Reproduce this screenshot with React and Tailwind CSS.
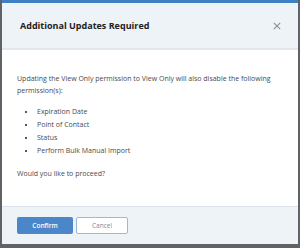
import React from 'react';

const items = ['Expiration Date', 'Point of Contact', 'Status', 'Perform Bulk Manual Import'];

export default function App() {
  return (
    <div className="w-[300px] h-[248px] bg-[#5f6368] pt-[3px] pb-[4px] pl-[2px] pr-[2px] flex" style={{ fontFamily: '"Open Sans", sans-serif' }}>
      <div className="relative flex-1 flex flex-col bg-white border-t-[3px] border-[#3f7fc4] -mt-[3px]">
        <div className="h-[47px] shrink-0 bg-[#eef3f8] border-b-2 border-[#e2e7ed] flex items-center justify-between pl-[18px] pr-[17px]">
          <h2 className="text-[9px] font-bold text-[#222]">Additional Updates Required</h2>
          <svg width="8" height="8" viewBox="0 0 10 10" className="text-[#8a8f96]">
            <path d="M1 1 L9 9 M9 1 L1 9" stroke="currentColor" strokeWidth="1.4" fill="none" />
          </svg>
        </div>
        <div className="flex-1 px-[15px] pt-[23px] text-[7px] leading-[12px] text-[#4a4a4a]">
          <p>Updating the View Only permission to View Only will also disable the following permission(s):</p>
          <ul className="mt-[8px] pl-[19px] list-disc leading-[13px] marker:text-[#222]">
            {items.map((t) => (
              <li key={t} className="pl-[1px]">{t}</li>
            ))}
          </ul>
          <p className="mt-[11px]">Would you like to proceed?</p>
        </div>
        <div className="h-[38px] shrink-0 bg-[#eef3f8] border-t border-[#dde3ea] flex items-center gap-[3px] px-[15px]">
          <button className="w-[56px] h-[17px] rounded-[2px] bg-[#4a86c8] text-white text-[6.5px] font-semibold">Confirm</button>
          <button className="w-[52px] h-[17px] rounded-[2px] bg-white border border-[#9ab9dc] text-[#7a8a9c] text-[6.5px]">Cancel</button>
        </div>
      </div>
    </div>
  );
}
